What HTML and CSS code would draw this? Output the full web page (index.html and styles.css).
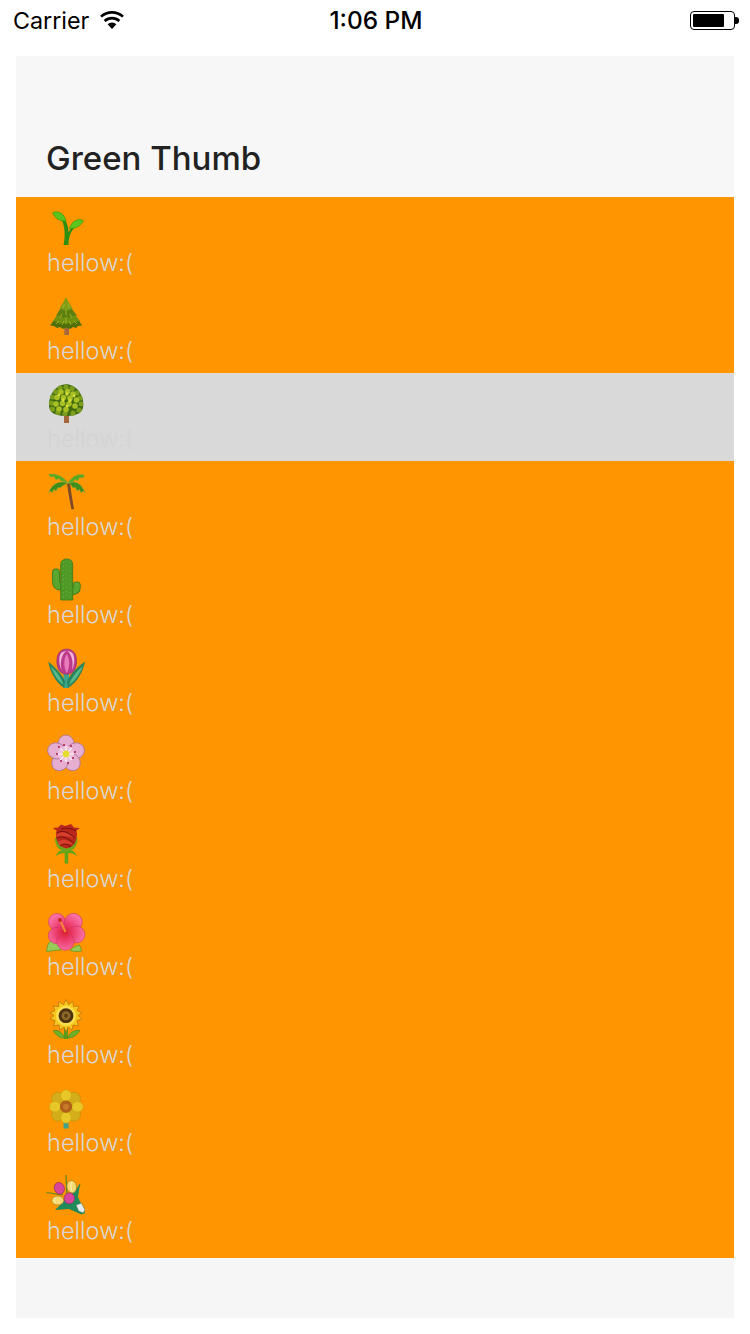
FILE: index.html
```html
<!DOCTYPE html>
<html lang="en">
<head>
    <meta charset="UTF-8">
    <meta name="viewport" content="width=device-width, initial-scale=1.0">
    <title>Green Thumb</title>
    <link rel="stylesheet" href="styles.css">
</head>
<body>

    <div class="status-bar">
        <div class="status-left">
            <span>Carrier</span>
            <svg class="wifi" width="26" height="20" viewBox="0 0 26 20">
                <path d="M13 19 L8.6 14.2 A6.6 6.6 0 0 1 17.4 14.2 Z" fill="#000"/>
                <path d="M5.6 11 A11 11 0 0 1 20.4 11" fill="none" stroke="#000" stroke-width="2.6"/>
                <path d="M2 6.6 A16.5 16.5 0 0 1 24 6.6" fill="none" stroke="#000" stroke-width="2.6"/>
            </svg>
        </div>
        <span class="status-time">1:06 PM</span>
        <div class="battery">
            <div class="battery-body"><div class="battery-level"></div></div>
            <div class="battery-tip"></div>
        </div>
    </div>

    <div class="app">
        <div class="header">
            <h1 class="title">Green Thumb</h1>
        </div>

        <div class="list">
            <!-- seedling -->
            <div class="row">
                <svg class="emoji" viewBox="0 0 40 40">
                    <path d="M16.5 36 C18.5 27 18 18 14.5 10 L17.5 9.5 C21 16 21.5 20 21.5 23.5 C23 20 25.5 17.5 28 15.5 L29 17 C24.5 21 21.5 27 21.5 36 Z" fill="#2c8f12"/>
                    <path d="M5.5 3.8 C10 1 17.5 4 19 12 C13 12.5 8 9.5 5.5 3.8 Z" fill="#58c41c" stroke="#2f9a10" stroke-width=".6"/>
                    <path d="M36.5 11.8 C32 9 25 11 22.5 19.5 C29 20 34 16.5 36.5 11.8 Z" fill="#5cc61e" stroke="#2f9a10" stroke-width=".6"/>
                </svg>
                <span class="label">hellow:(</span>
            </div>
            <!-- evergreen -->
            <div class="row">
                <svg class="emoji" viewBox="0 0 40 40">
                    <rect x="17.3" y="28" width="4.7" height="10" fill="#a5683c"/>
                    <path d="M3 28.5 L8 22 L11 17 L19 11 L27 17 L31 22 L35 28.5 L31 29 L29 31 L26 30 L23 32 L19.5 30.5 L16 32 L13 30 L10 31 L7 29 Z" fill="#4f6f0c"/>
                    <path d="M6 24 L12 16 L19 8 L26 16 L33 24 L28 25 L25 27 L22 25.5 L19 27.5 L16 25.5 L13 27 L10 25 Z" fill="#70900f"/>
                    <path d="M9 18.5 L14 11 L19 4 L24 11 L30 18.5 L25.5 19 L22.5 21 L19.5 19.5 L16 21 L13.5 19 Z" fill="#5d7f0e"/>
                    <path d="M12.5 12 L16 6 L19 0 L22 6 L26 12 L22.5 12.5 L19.5 14 L16 12.5 Z" fill="#7f9c16"/>
                    <path d="M9 27 L12 24 M15 28 L17 24 M24 28 L22 24 M30 27 L27 24 M13 21 L15 17 M25 21 L23 17 M19 26 L19 21 M19 18 L19 13 M16 11 L17.5 7 M22.5 11 L21 7" stroke="#aebb30" stroke-width=".8"/>
                </svg>
                <span class="label">hellow:(</span>
            </div>
            <!-- deciduous tree -->
            <div class="row row-selected">
                <svg class="emoji" viewBox="0 0 40 40">
                    <rect x="17" y="26" width="5" height="12" fill="#a5683c"/>
                    <path d="M19 -.7 C28 -.7 36.3 8 36.3 20 C36.3 27 31 31 19 31 C7 31 2 27 2 20 C2 8 10 -.7 19 -.7 Z" fill="#3f6a10"/>
                    <g fill="#7d9e1c">
                        <circle cx="13" cy="3" r="2.6"/><circle cx="19" cy="2" r="2.6"/><circle cx="25" cy="3.5" r="2.6"/>
                        <circle cx="9" cy="7" r="2.6"/><circle cx="30" cy="8" r="2.6"/><circle cx="5.5" cy="12" r="2.6"/>
                        <circle cx="33" cy="13" r="2.6"/><circle cx="4.5" cy="18" r="2.6"/><circle cx="34" cy="19" r="2.4"/>
                        <circle cx="5.5" cy="24" r="2.6"/><circle cx="32" cy="25" r="2.6"/><circle cx="11" cy="27.5" r="2.6"/>
                        <circle cx="18" cy="28.5" r="2.6"/><circle cx="26" cy="28" r="2.6"/>
                    </g>
                    <g fill="#a9bf24">
                        <circle cx="14" cy="7" r="2.8"/><circle cx="20.5" cy="6.5" r="2.8"/><circle cx="26" cy="9" r="2.8"/>
                        <circle cx="10" cy="12.5" r="2.8"/><circle cx="16.5" cy="12.5" r="2.8"/><circle cx="23" cy="13" r="2.8"/>
                        <circle cx="29.5" cy="15" r="2.8"/><circle cx="9" cy="19" r="2.8"/><circle cx="15.5" cy="18.5" r="2.8"/>
                        <circle cx="22" cy="19" r="2.8"/><circle cx="28" cy="21" r="2.8"/><circle cx="12" cy="24" r="2.8"/>
                        <circle cx="19" cy="24.5" r="2.8"/>
                    </g>
                    <g fill="#d6e03a">
                        <circle cx="20" cy="9" r="1.7"/><circle cx="16" cy="15" r="1.7"/><circle cx="23" cy="15.5" r="1.7"/>
                        <circle cx="27" cy="11" r="1.4"/><circle cx="12" cy="10" r="1.4"/><circle cx="20" cy="21" r="1.5"/>
                    </g>
                </svg>
                <span class="label">hellow:(</span>
            </div>
            <!-- palm -->
            <div class="row">
                <svg class="emoji" viewBox="0 0 40 40">
                    <path d="M20 10 L23 10 C24 18 25.5 27 27 36 L24.5 36.5 C22.5 28 21 18 20 10 Z" fill="#7d4a26"/>
                    <path d="M21 10 C13 7 5 10 1.5 20 L3.5 18 L5 20 L7 16.5 L9 18 L11 14.5 L13 15 C16 12 19 11 21 10 Z" fill="#3d8f1c" stroke="#9aa83a" stroke-width=".5"/>
                    <path d="M21 10 C29 7 35 11 38 20 L36 18 L34 20 L32.5 16.5 L30 18 L28.5 14.5 L26 15 C24.5 12 23 11 21 10 Z" fill="#3d8f1c" stroke="#9aa83a" stroke-width=".5"/>
                    <path d="M21 10 C15 2 7 0 1.5 1.5 L4 4 L7 3.5 L9 7 L12 5.5 L14 8 C17 8 19 9 21 10 Z" fill="#55a822" stroke="#9aa83a" stroke-width=".5"/>
                    <path d="M21 10 C26 2 33 0 38 2.5 L35.5 5 L32.5 4.5 L31 8 L28 6.5 L26 9 C24 9 22.5 9.5 21 10 Z" fill="#55a822" stroke="#9aa83a" stroke-width=".5"/>
                </svg>
                <span class="label">hellow:(</span>
            </div>
            <!-- cactus -->
            <div class="row">
                <svg class="emoji" viewBox="0 0 40 40">
                    <g fill="none" stroke="#3a7a1c" stroke-linecap="round">
                        <path d="M9 11.5 V20 Q9 25.5 14.5 25.5" stroke-width="8"/>
                        <path d="M29.7 24.5 V26 Q29.7 30 25 30" stroke-width="8"/>
                    </g>
                    <g fill="none" stroke="#5aa52e" stroke-linecap="round">
                        <path d="M9 11.5 V20 Q9 25.5 14.5 25.5" stroke-width="6.4"/>
                        <path d="M29.7 24.5 V26 Q29.7 30 25 30" stroke-width="6.4"/>
                    </g>
                    <path d="M13.7 39 V4 C13.7 0 16 -2 19.7 -2 C23.5 -2 25.7 0 25.7 4 V39 Z" fill="#4f9a26" stroke="#3a7a1c" stroke-width=".8"/>
                    <path d="M16.5 1 V39 M19.7 0 V39 M23 1 V39" stroke="#7dbb52" stroke-width=".8" stroke-dasharray=".8 3.5"/>
                    <path d="M9 12 V21 M29.7 23 V27" stroke="#7dbb52" stroke-width=".8" stroke-dasharray=".8 3.5"/>
                </svg>
                <span class="label">hellow:(</span>
            </div>
            <!-- tulip -->
            <div class="row">
                <svg class="emoji" viewBox="0 0 40 40">
                    <rect x="16.5" y="24" width="5.5" height="15" fill="#3aa58c"/>
                    <path d="M1.3 12.7 C3 22 8 33 17 38.7 L18 33 C16 26 8 18 1.3 12.7 Z" fill="#27845c"/>
                    <path d="M38 12.7 C36 22 31 33 21 38.7 L20 33 C22 26 30 18 38 12.7 Z" fill="#27845c"/>
                    <path d="M3.5 17 C6 24 10 31 16.5 36 C15 29 9 22 3.5 17 Z M36 17 C33 24 29 31 22 36 C24 29 30 22 36 17 Z" fill="#56b98a"/>
                    <path d="M19.7 0 C24.5 0 28.3 3 29.2 8 C30.5 15 29 25.3 19.7 25.3 C10.5 25.3 9 15 10.2 8 C11.2 3 15 0 19.7 0 Z" fill="#bb3a8c" stroke="#8a2a68" stroke-width=".5"/>
                    <path d="M19.7 1.5 C15.5 4 12.5 12 14.5 21 C11.5 15 11.5 7 14.5 3.5 Z M19.7 1.5 C24 4 27 12 25 21 C28 15 28 7 25 3.5 Z" fill="#f2b4d8"/>
                    <path d="M19.7 5 C16.5 10 16.5 18 19.7 24 C23 18 23 10 19.7 5 Z" fill="#ea7bbb"/>
                </svg>
                <span class="label">hellow:(</span>
            </div>
            <!-- cherry blossom -->
            <div class="row">
                <svg class="emoji" viewBox="0 0 40 40">
                    <g fill="#e6aed0" stroke="#a8749c" stroke-width=".8">
                        <ellipse cx="19" cy="7" rx="8" ry="9"/>
                        <ellipse cx="19" cy="7" rx="8" ry="9" transform="rotate(72 19 17)"/>
                        <ellipse cx="19" cy="7" rx="8" ry="9" transform="rotate(144 19 17)"/>
                        <ellipse cx="19" cy="7" rx="8" ry="9" transform="rotate(216 19 17)"/>
                        <ellipse cx="19" cy="7" rx="8" ry="9" transform="rotate(288 19 17)"/>
                    </g>
                    <circle cx="19" cy="17" r="8" fill="#edc2dc"/>
                    <path d="M19 17 L13 11 M19 17 L19 9 M19 17 L25 11 M19 17 L27 17 M19 17 L25 23 M19 17 L19 25 M19 17 L13 23 M19 17 L11 17" stroke="#fff" stroke-width=".9"/>
                    <g fill="#a81c50">
                        <circle cx="12" cy="10" r="1"/><circle cx="17" cy="8" r="1"/><circle cx="24" cy="9" r="1"/>
                        <circle cx="28" cy="15" r="1"/><circle cx="26" cy="21" r="1"/><circle cx="21" cy="26" r="1"/>
                        <circle cx="14" cy="24" r="1"/><circle cx="10" cy="17" r="1"/>
                    </g>
                    <circle cx="19" cy="17" r="3.4" fill="#e6dc30"/>
                </svg>
                <span class="label">hellow:(</span>
            </div>
            <!-- rose -->
            <div class="row">
                <svg class="emoji" viewBox="0 0 40 40">
                    <rect x="17.7" y="22" width="3.5" height="16.5" fill="#5ea51a"/>
                    <path d="M18 25 C13 25 10 27 9 31 L11.5 29.5 C14 28 16 28 18 28 Z M21 25 C26 25 28 27 30 31 L27.5 29.5 C25 28 23 28 21 28 Z" fill="#5ea51a"/>
                    <path d="M8 13 C8 21 12 26.5 19.5 26.5 C27 26.5 30.5 21 30.5 13 Z" fill="#6ea51a"/>
                    <path d="M5.7 3 L11 2.5 L14 -.5 L18 1 L24 -1 L27 2.5 L33 3 L29.5 5.5 C31 12 29 22 19.5 23.5 C10 22 8 12 9.5 5.5 Z" fill="#b8261c"/>
                    <path d="M10 9 C15 5.5 21 7 27.5 14 C22 11 15 10 10 12.5 Z M11 17 C16 13.5 22 15 27 20 C22 18.5 16 18 12.5 20.5 Z" fill="#d8402e"/>
                    <path d="M10 8 C15 5 20 6 28 13 M9.5 13 C15 10 21 13 27.5 19 M13 21 C17 18 21 19 24 22 M14 4 C18 2.5 24 3 29 6" fill="none" stroke="#70100c" stroke-width=".9"/>
                </svg>
                <span class="label">hellow:(</span>
            </div>
            <!-- hibiscus -->
            <div class="row">
                <svg class="emoji" viewBox="0 0 40 40">
                    <defs>
                        <radialGradient id="hibiscus-petal" gradientUnits="userSpaceOnUse" cx="18" cy="19" r="19">
                            <stop offset="0" stop-color="#d81f30"/>
                            <stop offset=".45" stop-color="#ec3c6c"/>
                            <stop offset="1" stop-color="#f870a4"/>
                        </radialGradient>
                    </defs>
                    <path d="M-.3 38.7 C-.3 33 2 28.5 5 27 C10 28 13.5 33 14 37 C9 37 4 38 -.3 38.7 Z" fill="#96cc58" stroke="#4f8a20" stroke-width=".6"/>
                    <path d="M23 37.5 C26 34 30 32.5 32.5 32 L34.7 38 C31 38.7 27 38.5 23 37.5 Z" fill="#96cc58" stroke="#4f8a20" stroke-width=".6"/>
                    <g fill="url(#hibiscus-petal)" stroke="#c02a60" stroke-width=".5">
                        <circle cx="10" cy="9" r="8.5"/>
                        <circle cx="26.5" cy="9" r="8.7"/>
                        <circle cx="9.5" cy="22.5" r="8.2"/>
                        <circle cx="29.5" cy="21.5" r="8.5"/>
                        <circle cx="18.5" cy="28.5" r="8.7"/>
                    </g>
                    <circle cx="18" cy="18" r="7" fill="url(#hibiscus-petal)"/>
                    <path d="M18.5 19 L13 7" stroke="#f08a3a" stroke-width="2"/>
                    <circle cx="13" cy="7" r="2" fill="#c82a28"/>
                </svg>
                <span class="label">hellow:(</span>
            </div>
            <!-- sunflower -->
            <div class="row">
                <svg class="emoji" viewBox="0 0 40 40">
                    <rect x="17" y="26" width="4" height="12" fill="#5f9a1a"/>
                    <path d="M6.3 29.5 C11 28.5 15 31 18 37 C13 37.5 9 34.5 6.3 29.5 Z M33 29.5 C28 28.5 23 31 20.5 37 C25 37.5 30 34.5 33 29.5 Z" fill="#6fb02a" stroke="#3f7a10" stroke-width=".5"/>
                    <path d="M19 -1.5 L21.5 3.5 L26 .5 L26.5 5.5 L32 5 L30 9.5 L35 12 L31 14.5 L35 18 L30 19.5 L31.5 25 L26 24 L25 29 L21 26 L19 31 L17 26 L13 29 L12 24 L6.5 25 L8 19.5 L3 18 L7 14.5 L3 12 L8 9.5 L6 5 L11.5 5.5 L12 .5 L16.5 3.5 Z" fill="#f6c81e" stroke="#b86a14" stroke-width=".7"/>
                    <circle cx="19" cy="14.7" r="10" fill="#fde050"/>
                    <circle cx="19" cy="14.7" r="7.4" fill="#4e3210"/>
                    <circle cx="19" cy="14.7" r="4.5" fill="#8a6a2a"/>
                    <circle cx="19" cy="14.7" r="2" fill="#5c3e14"/>
                </svg>
                <span class="label">hellow:(</span>
            </div>
            <!-- yellow blossom -->
            <div class="row">
                <svg class="emoji" viewBox="0 0 40 40">
                    <rect x="16.5" y="30" width="5" height="9.5" fill="#3ea58a"/>
                    <g fill="#d4ad1a" stroke="#b08c10" stroke-width=".5">
                        <circle cx="11" cy="9.7" r="6.5"/><circle cx="27" cy="9.7" r="6.5"/>
                        <circle cx="11" cy="25.7" r="6.5"/><circle cx="27" cy="25.7" r="6.5"/>
                    </g>
                    <g fill="#e8c828" stroke="#c4a015" stroke-width=".5">
                        <ellipse cx="19" cy="6.5" rx="5.2" ry="5.7"/><ellipse cx="19" cy="28.5" rx="5.2" ry="5.7"/>
                        <ellipse cx="8" cy="17.7" rx="5.7" ry="5.2"/><ellipse cx="30.5" cy="17.7" rx="5.7" ry="5.2"/>
                    </g>
                    <circle cx="19" cy="17.7" r="6.2" fill="#b0601a"/>
                    <circle cx="19" cy="17.7" r="3" fill="#c87a2a"/>
                </svg>
                <span class="label">hellow:(</span>
            </div>
            <!-- bouquet -->
            <div class="row">
                <svg class="emoji" viewBox="0 0 40 40">
                    <path d="M19 -2 L20 20 M-.5 15.5 L16 18 M29 17 L33 7" stroke="#5a8a20" stroke-width="1.2" fill="none"/>
                    <path d="M20 20 L28 14 L33 7 L31 20 L38 36 L34.5 37.5 L22 32 L8 33 L14 27 Z" fill="#1f8a5a"/>
                    <path d="M29 28 L34.5 26 L38 33 L36 36 L31.5 34 Z" fill="#e6ecec" stroke="#2f6a4a" stroke-width=".5"/>
                    <ellipse cx="12.3" cy="11.3" rx="5" ry="6" fill="#d8459a" stroke="#8a2a60" stroke-width=".6" transform="rotate(-20 12.3 11.3)"/>
                    <ellipse cx="24.7" cy="9.7" rx="4.8" ry="6.3" fill="#f8d870" stroke="#9a7a20" stroke-width=".6" transform="rotate(-10 24.7 9.7)"/>
                    <ellipse cx="10.7" cy="23.5" rx="6" ry="4.5" fill="#f8d870" stroke="#9a7a20" stroke-width=".6"/>
                    <ellipse cx="22.3" cy="21.3" rx="5.3" ry="5.5" fill="#d8459a" stroke="#8a2a60" stroke-width=".6"/>
                    <path d="M25 5.5 C23.5 8 23.5 11 25 14 M9 20.5 C7 22.5 7 24.5 9 26" fill="none" stroke="#fff5c0" stroke-width="1"/>
                </svg>
                <span class="label">hellow:(</span>
            </div>
        </div>

        <div class="footer"></div>
    </div>

</body>
</html>
```

FILE: styles.css
```css
body {
    margin: 0;
    font-family: Inter, "Liberation Sans", sans-serif;
    background-color: white;
}

.status-bar {
    height: 40px;
    padding: 0 11px 0 13px;
    display: grid;
    grid-template-columns: 1fr auto 1fr;
    align-items: center;
    color: black;
    font-size: 23.3px;
}

.status-left {
    display: flex;
    align-items: center;
    gap: 10px;
}

.status-time {
    font-size: 24.4px;
    font-weight: 500;
}

.battery {
    display: flex;
    align-items: center;
    justify-content: flex-end;
}

.battery-body {
    width: 45px;
    height: 19px;
    box-sizing: border-box;
    border: 1px solid black;
    border-radius: 4px;
    padding: 2px;
}

.battery-level {
    width: 31px;
    height: 100%;
    background-color: black;
    border-radius: 1px;
}

.battery-tip {
    width: 4px;
    height: 7px;
    background-color: black;
    border-radius: 0 3px 3px 0;
}

.app {
    margin: 16px 16px 0;
}

.header {
    height: 141px;
    box-sizing: border-box;
    padding: 0 31px 19px 30px;
    display: flex;
    align-items: flex-end;
    background-color: #f7f7f7;
}

.title {
    margin: 0;
    font-size: 33px;
    font-weight: 550;
    color: #222;
}

.list {
    padding-bottom: 5px;
    background-color: #ff9500;
}

.row {
    height: 88px;
    box-sizing: border-box;
    padding: 12px 31px 0;
}

.row-selected {
    background-color: #d9d9d9;
}

.row-selected .label {
    color: #d4d4d4;
}

.emoji {
    display: block;
    width: 40px;
    height: 40px;
    overflow: visible;
}

.label {
    display: block;
    font-size: 23.6px;
    font-weight: 300;
    line-height: 28px;
    color: #d8d8d8;
}

.footer {
    height: 60px;
    background-color: #f6f6f6;
}
```
